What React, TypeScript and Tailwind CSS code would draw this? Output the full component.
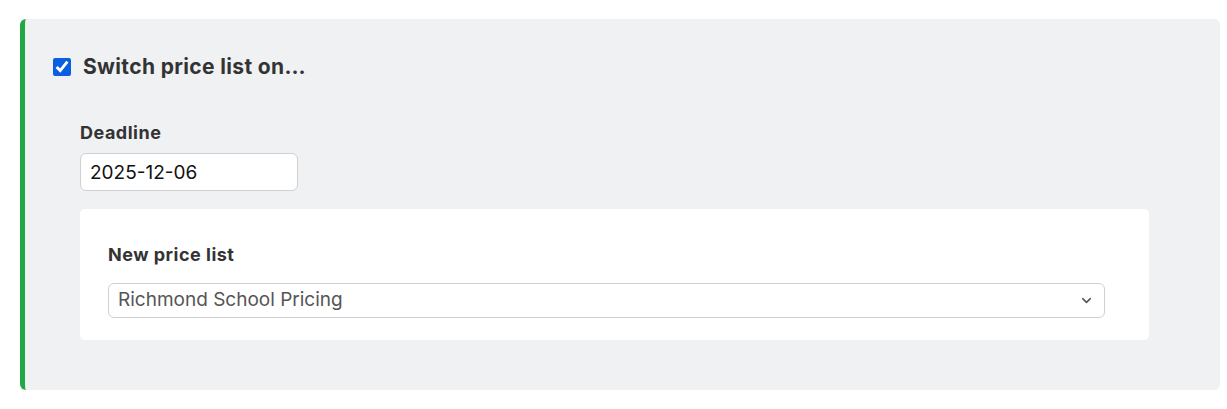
import { ChevronDown } from "lucide-react"

export default function App() {
  return (
    <div className="min-h-screen bg-white pt-[19px] pl-[20px] font-['Inter',sans-serif] text-[#333]">
      <div className="w-[1200px] h-[371px] rounded-[6px] bg-[#f0f1f3] border-l-[5px] border-[#1fa844] pl-[28px] pt-[36px]">
        <label className="flex items-center gap-[12px] h-[24px]">
          <input
            type="checkbox"
            defaultChecked
            className="w-[18px] h-[18px] m-0 accent-[#0a5fe0]"
          />
          <span className="text-[21px] font-bold leading-[24px] tracking-[0.35px] text-[#333]">Switch price list on…</span>
        </label>

        <div className="ml-[27px] mt-[42px]">
          <div className="text-[18px] font-bold leading-[24px] tracking-[0.5px] text-[#333]">Deadline</div>
          <input
            type="text"
            defaultValue="2025-12-06"
            className="mt-[8px] block w-[218px] h-[38px] rounded-[6px] border border-[#d0d0d0] bg-white px-[9px] text-[19px] text-[#111] outline-none"
          />

          <div className="mt-[18px] w-[1069px] h-[131px] rounded-[5px] bg-white pl-[28px] pt-[34px]">
            <div className="text-[18px] font-bold leading-[24px] tracking-[0.5px] text-[#333]">New price list</div>
            <div className="mt-[16px] w-[997px] h-[35px] rounded-[6px] border border-[#d0d0d0] bg-white flex items-center justify-between pl-[9px] pr-[10px]">
              <span className="text-[19px] text-[#555]">Richmond School Pricing</span>
              <ChevronDown size={15} strokeWidth={2.5} className="text-[#555]" />
            </div>
          </div>
        </div>
      </div>
    </div>
  )
}
